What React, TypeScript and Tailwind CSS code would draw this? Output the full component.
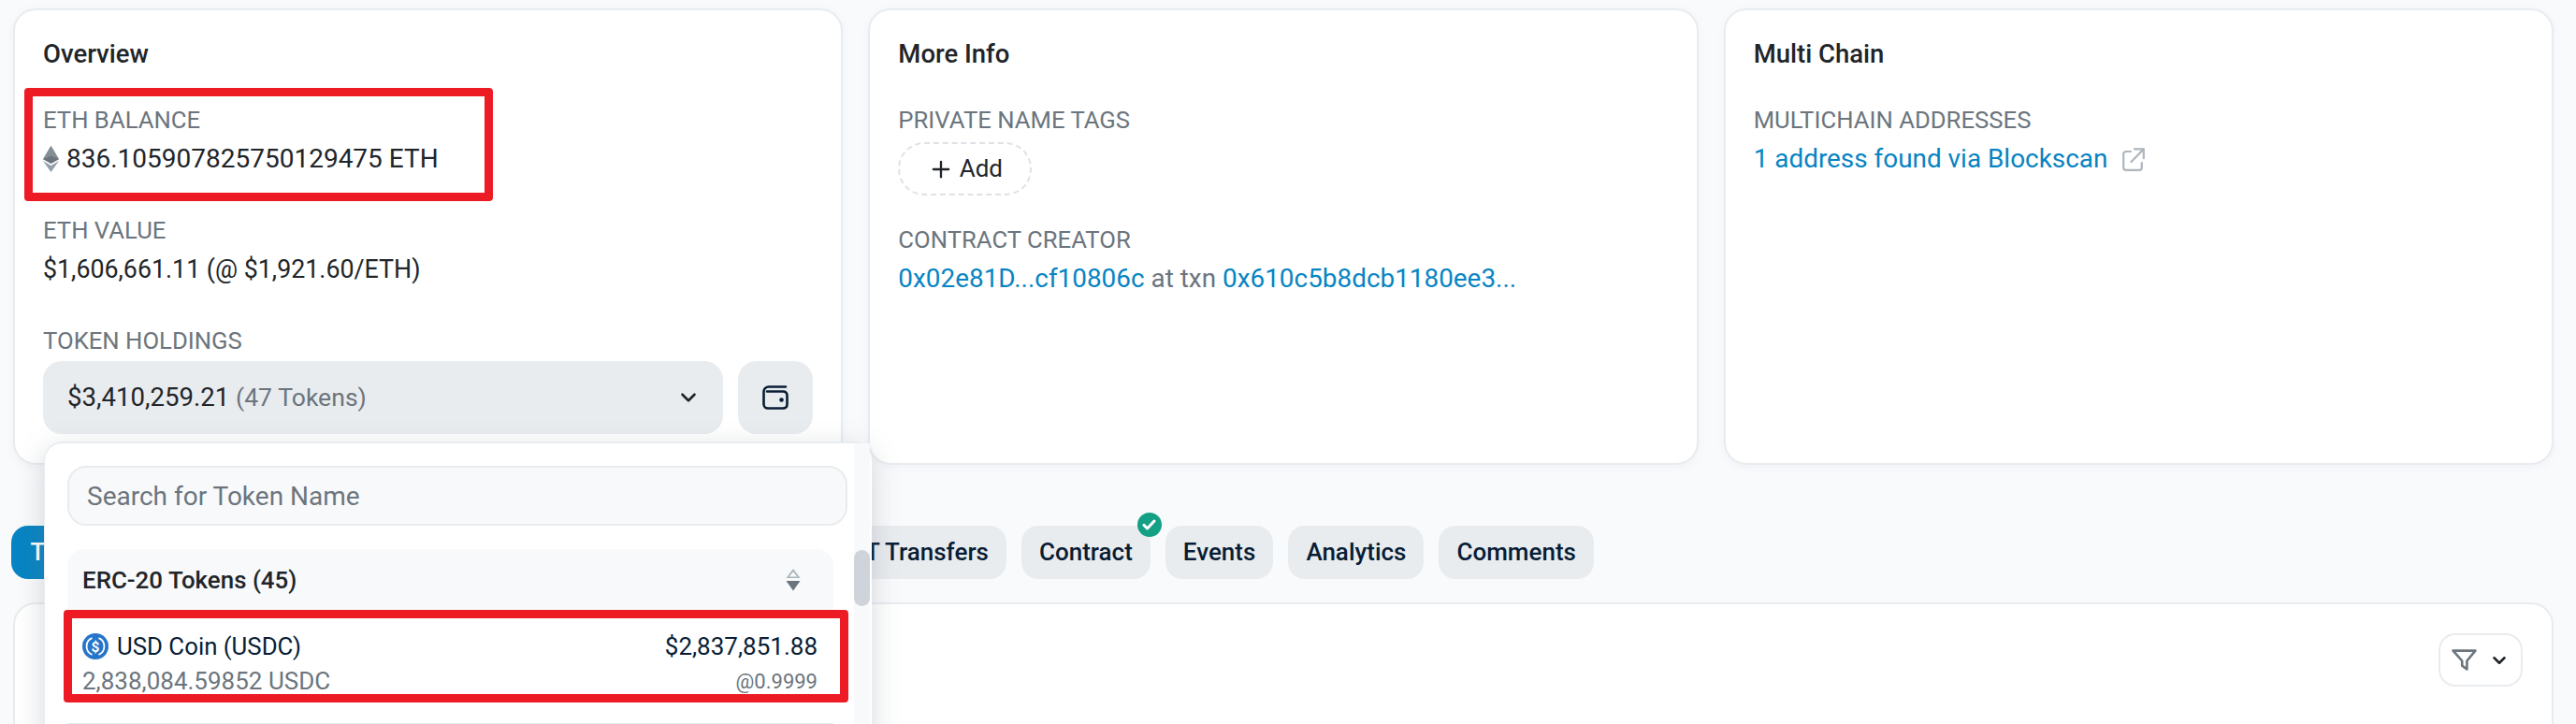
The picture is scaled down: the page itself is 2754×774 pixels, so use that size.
import { ChevronDown, Plus } from "lucide-react";

const hiddenTabs = [
  { label: "Transactions", width: "w-[192px]", active: true },
  { label: "Internal Transactions", width: "w-[278px]", active: false },
  { label: "Token Transfers (ERC-20)", width: "w-[333px]", active: false },
  { label: "NFT Transfers", width: "w-[213px]", active: false },
];

const Label = ({ children, className = "" }: { children: React.ReactNode; className?: string }) => (
  <div className={`text-[25.7px] leading-[30px] text-[#6c757d] uppercase ${className}`}>{children}</div>
);

const Card = ({ title, children }: { title: string; children: React.ReactNode }) => (
  <div className="bg-white rounded-[24px] border-2 border-[#e9ecef] shadow-[0_2px_8px_rgba(189,197,209,0.15)] pt-[30px] pl-[30px] pr-[30px] h-[488px]">
    <h2 className="text-[27.5px] leading-[34px] font-medium text-[#212529]">{title}</h2>
    {children}
  </div>
);

const EthIcon = () => (
  <svg width="17" height="28" viewBox="0 0 17 28" className="shrink-0">
    <path d="M8.5 0 L17 14.2 L8.5 19 L0 14.2 Z" fill="#6c757d" />
    <path d="M8.5 0 L17 14.2 L8.5 10.4 L0 14.2 Z" fill="#868e96" />
    <path d="M0 16 L8.5 21 L17 16 L8.5 28 Z" fill="#95a0a8" />
  </svg>
);

const WalletIcon = () => (
  <svg width="28" height="26" viewBox="0 0 28 26" fill="none" stroke="#081d35" strokeWidth="2.6" strokeLinecap="round">
    <path d="M25 1.5H7C3.5 1.5 1.5 4 1.5 6.5V20C1.5 22.8 3.5 24.5 6 24.5H22C24.6 24.5 26.5 22.8 26.5 20V11C26.5 8.2 24.6 6.5 22 6.5H5" />
    <circle cx="20.5" cy="15.5" r="1" fill="#081d35" />
  </svg>
);

const ExternalIcon = () => (
  <svg width="24" height="25" viewBox="0 0 24 25" fill="none" stroke="#adb5bd" strokeWidth="2.2" strokeLinecap="round" strokeLinejoin="round">
    <path d="M9 4H4C2.4 4 1.2 5.2 1.2 6.8V21C1.2 22.6 2.4 23.8 4 23.8H18C19.6 23.8 20.8 22.6 20.8 21V16" />
    <path d="M13 1.4H22.8V11.2" />
    <path d="M22.6 1.6L9.5 15" />
  </svg>
);

const FunnelIcon = () => (
  <svg width="27" height="23" viewBox="0 0 27 23" fill="none" stroke="#6c757d" strokeWidth="2.6" strokeLinejoin="round" strokeLinecap="round">
    <path d="M1.6 1.6H25.4L16.4 12.5V21.5L11.2 17.6V12.5Z" />
  </svg>
);

const SortIcon = () => (
  <svg width="16" height="24" viewBox="0 0 16 24">
    <path d="M8 0 L15.5 10 H0.5 Z M8 3.2 L3.8 8.6 H12.2 Z" fill="#adb5bd" fillRule="evenodd" />
    <path d="M0.5 13 H15.5 L8 23.5 Z" fill="#6c757d" />
  </svg>
);

const UsdcIcon = () => (
  <svg width="28" height="28" viewBox="0 0 28 28" className="shrink-0">
    <circle cx="14" cy="14" r="14" fill="#2775ca" />
    <path d="M10.5 5.2A9.5 9.5 0 0 0 10.5 22.8" fill="none" stroke="white" strokeWidth="1.8" />
    <path d="M17.5 5.2A9.5 9.5 0 0 1 17.5 22.8" fill="none" stroke="white" strokeWidth="1.8" />
    <text x="14" y="19.6" textAnchor="middle" fontSize="15.5" fontWeight="700" fill="white" fontFamily="Roboto, sans-serif">$</text>
  </svg>
);

const Tab = ({ label, className = "" }: { label: string; className?: string }) => (
  <button className={`h-[57px] rounded-[18px] bg-[#e9ecef] px-[19px] text-[26px] font-medium text-[#081d35] whitespace-nowrap overflow-hidden ${className}`}>
    {label}
  </button>
);

export default function App() {
  return (
    <div className="relative w-[2754px] h-[774px] overflow-hidden bg-[#f9fafc] font-[Roboto,sans-serif] flex flex-col pt-[9px] pl-[14px] pr-[24px]">
      <div className="grid grid-cols-3 gap-[27px]">
        <Card title="Overview">
          <Label className="mt-[38px]">ETH Balance</Label>
          <div className="mt-[10px] flex items-center gap-[8px] text-[28px] leading-[34px] text-[#212529]">
            <EthIcon />
            <span>836.105907825750129475 ETH</span>
          </div>
          <Label className="mt-[44px]">ETH Value</Label>
          <div className="mt-[10px] text-[26.8px] leading-[34px] text-[#212529]">$1,606,661.11 (@ $1,921.60/ETH)</div>
          <Label className="mt-[44px]">Token Holdings</Label>
          <div className="mt-[7px] flex gap-[16px]">
            <div className="w-[727px] h-[78px] rounded-[20px] bg-[#e9ecef] flex items-center justify-between pl-[26px] pr-[24px] text-[27.6px]">
              <span className="text-[#212529]">
                $3,410,259.21 <span className="text-[#6c757d] text-[26.6px]">(47 Tokens)</span>
              </span>
              <ChevronDown size={26} strokeWidth={2.4} className="text-[#212529]" />
            </div>
            <div className="w-[80px] h-[78px] rounded-[20px] bg-[#e9ecef] flex items-center justify-center">
              <WalletIcon />
            </div>
          </div>
        </Card>

        <Card title="More Info">
          <Label className="mt-[38px]">Private Name Tags</Label>
          <button className="mt-[9px] w-[143px] h-[57px] rounded-[28px] border-2 border-dashed border-[#dee2e6] flex items-center justify-center gap-[6px] text-[26px] text-[#212529]">
            <Plus size={28} strokeWidth={2} />
            Add
          </button>
          <Label className="mt-[32px]">Contract Creator</Label>
          <div className="mt-[10px] text-[27.9px] leading-[34px] text-[#6c757d]">
            <span className="text-[#0784c3]">0x02e81D...cf10806c</span> at txn{" "}
            <span className="text-[#0784c3]">0x610c5b8dcb1180ee3...</span>
          </div>
        </Card>

        <Card title="Multi Chain">
          <Label className="mt-[38px]">Multichain Addresses</Label>
          <div className="mt-[10px] flex items-center gap-[16px] text-[27.9px] leading-[34px] text-[#0784c3]">
            <span>1 address found via Blockscan</span>
            <ExternalIcon />
          </div>
        </Card>
      </div>

      <div className="mt-[65px] -ml-[2px] flex gap-[16px]">
        {hiddenTabs.map((t) =>
          t.active ? (
            <button key={t.label} className={`${t.width} h-[57px] rounded-[18px] bg-[#0784c3] text-[26px] font-medium text-white`}>
              {t.label}
            </button>
          ) : (
            <Tab key={t.label} label={t.label} className={`${t.width} text-right`} />
          )
        )}
        <div className="relative">
          <Tab label="Contract" />
          <span className="absolute -right-[12px] -top-[14px] w-[26px] h-[26px] rounded-full bg-[#14a085] flex items-center justify-center">
            <svg width="15" height="12" viewBox="0 0 15 12" fill="none" stroke="white" strokeWidth="3" strokeLinecap="round" strokeLinejoin="round">
              <path d="M2 6.4L5.6 10L13 2" />
            </svg>
          </span>
        </div>
        <Tab label="Events" />
        <Tab label="Analytics" />
        <Tab label="Comments" />
      </div>

      <div className="mt-[25px] flex-1 -mb-[40px] bg-white rounded-t-[24px] border-2 border-[#e9ecef] flex justify-end items-start pt-[31px] pr-[31px]">
        <button className="w-[90px] h-[57px] rounded-[18px] border-2 border-[#e9ecef] flex items-center justify-center gap-[13px]">
          <FunnelIcon />
          <ChevronDown size={22} strokeWidth={2.8} className="text-[#212529]" />
        </button>
      </div>

      {/* token dropdown */}
      <div className="absolute left-[47px] top-[472px] w-[885px] h-[340px] bg-white rounded-t-[20px] border-t-2 border-l border-[#e9ecef] shadow-[0_8px_30px_rgba(108,117,125,0.28)] flex">
        <div className="flex-1 pl-[24px] pr-[7px] pt-[24px] min-w-0">
          <div className="h-[64px] rounded-[20px] bg-[#f8f9fa] border-2 border-[#e9ecef] flex items-center pl-[19px] pt-[2px] text-[28px] text-[#6c757d]">
            Search for Token Name
          </div>
          <div className="mt-[25px] mr-[15px] h-[66px] rounded-t-[18px] bg-[#f8f9fa] flex items-center justify-between pl-[16px] pr-[35px] text-[25.9px] font-medium text-[#212529]">
            ERC-20 Tokens (45)
            <SortIcon />
          </div>
          <div className="mr-[15px] h-[120px] pl-[16px] pr-[17px] pt-[23px]">
            <div className="flex items-center justify-between h-[30px]">
              <div className="flex items-center gap-[9px] text-[25.8px] text-[#081d35]">
                <UsdcIcon />
                USD Coin (USDC)
              </div>
              <div className="text-[26px] text-[#081d35]">$2,837,851.88</div>
            </div>
            <div className="mt-[7px] flex items-center justify-between h-[30px] text-[#6c757d]">
              <span className="text-[26px]">2,838,084.59852 USDC</span>
              <span className="text-[22px]">@0.9999</span>
            </div>
          </div>
          <div className="mr-[15px] h-[2px] bg-[#e9ecef]" />
        </div>
        <div className="w-[17px] mr-[2px] bg-[#f8f9fa]">
          <div className="mt-[114px] h-[60px] rounded-full bg-[#ced4da]" />
        </div>
      </div>

      {/* red annotation boxes */}
      <div className="absolute left-[26px] top-[94px] w-[501px] h-[121px] border-[9px] border-[#ed1c24] rounded-[4px]" />
      <div className="absolute left-[68px] top-[652px] w-[839px] h-[99px] border-[9px] border-[#ed1c24] rounded-[4px]" />
    </div>
  );
}
